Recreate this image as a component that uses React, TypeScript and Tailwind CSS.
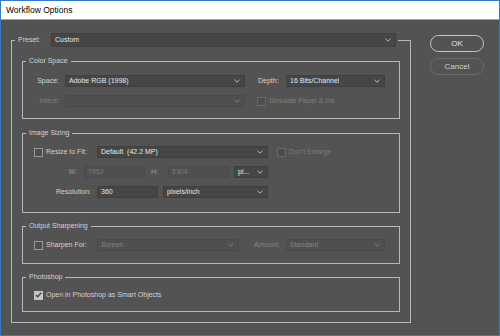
import type { ReactNode } from "react";

const font = { fontFamily: '"Liberation Sans", Arial, sans-serif' };

function Chevron({ dim }: { dim?: boolean }) {
  return (
    <svg width="6" height="4" viewBox="0 0 6 4" className="shrink-0">
      <polyline
        points="0.5,0.8 3,3.2 5.5,0.8"
        fill="none"
        stroke={dim ? "#7c7c7c" : "#bdbdbd"}
        strokeWidth="1"
      />
    </svg>
  );
}

function Select({
  value,
  w,
  disabled,
  h = "h-[12px]",
}: {
  value: string;
  w: string;
  disabled?: boolean;
  h?: string;
}) {
  return (
    <div
      className={`${w} ${h} flex shrink-0 items-center justify-between border pl-[3px] pr-[4px] ${
        disabled
          ? "border-[#4a4a4a] bg-[#4f4f4f] text-[#868686]"
          : "border-[#3f3f3f] bg-[#464646] text-[#e6e6e6]"
      }`}
    >
      <span className="truncate whitespace-pre">{value}</span>
      <Chevron dim={disabled} />
    </div>
  );
}

function Input({ value, w, disabled }: { value: string; w: string; disabled?: boolean }) {
  return (
    <div
      className={`${w} flex h-[12px] shrink-0 items-center border pl-[3px] ${
        disabled
          ? "border-[#4a4a4a] bg-[#4f4f4f] text-[#7d7d7d]"
          : "border-[#3f3f3f] bg-[#464646] text-[#e6e6e6]"
      }`}
    >
      {value}
    </div>
  );
}

function Checkbox({ checked, disabled }: { checked?: boolean; disabled?: boolean }) {
  if (checked) {
    return (
      <div className="flex h-[9px] w-[9px] shrink-0 items-center justify-center bg-[#c4c4c4]">
        <svg width="7" height="6" viewBox="0 0 7 6">
          <polyline points="0.8,3 2.7,4.8 6.2,0.8" fill="none" stroke="#4b4b4b" strokeWidth="1.4" />
        </svg>
      </div>
    );
  }
  return (
    <div
      className={`h-[9px] w-[9px] shrink-0 border bg-[#4d4d4d] ${
        disabled ? "border-[#686868]" : "border-[#9a9a9a]"
      }`}
    />
  );
}

function Group({
  title,
  children,
  className,
}: {
  title: string;
  children: ReactNode;
  className: string;
}) {
  return (
    <fieldset className={`border border-[#b8b8b8] ${className}`}>
      <legend className="ml-[3px] px-[3px] leading-[10px] text-[#d2d2d2]">{title}</legend>
      {children}
    </fieldset>
  );
}

export default function App() {
  return (
    <div
      style={font}
      className="flex h-[336px] w-[500px] flex-col border border-[#2f7cc9] bg-[#535353] text-[7px] leading-[10px] text-[#d2d2d2]"
    >
      <div className="flex h-[19px] shrink-0 items-center border-b border-[#a3a3a3] bg-white pl-[5px] text-[8.5px] text-black">
        Workflow Options
      </div>

      <div className="flex pt-[13px]">
        <fieldset className="ml-[10px] w-[400px] border border-[#b8b8b8]">
          <legend className="ml-[3px] flex items-center pl-[3px] pr-[2px]">
            <span className="w-[33px] text-[#d2d2d2]">Preset:</span>
            <Select value="Custom" w="w-[345px]" h="h-[14px]" />
          </legend>

          <div className="px-[10px] pb-[10px] pt-[9px]">
            <Group title="Color Space" className="pb-[11px] pt-[9px]">
              <div className="flex h-[12px] items-center">
                <span className="w-[36px] text-right">Space:</span>
                <div className="ml-[6px]">
                  <Select value="Adobe RGB (1998)" w="w-[180px]" />
                </div>
                <span className="ml-[13px] w-[28px]">Depth:</span>
                <Select value="16 Bits/Channel" w="w-[99px]" />
              </div>
              <div className="mt-[8px] flex h-[12px] items-center">
                <span className="w-[36px] text-right text-[#7e7e7e]">Intent:</span>
                <div className="ml-[6px]">
                  <Select value="" w="w-[180px]" disabled />
                </div>
                <div className="ml-[12px]">
                  <Checkbox disabled />
                </div>
                <span className="ml-[3px] text-[#7e7e7e]">Simulate Paper &amp; Ink</span>
              </div>
            </Group>

            <Group title="Image Sizing" className="mt-[9px] pb-[14px] pt-[8px]">
              <div className="flex h-[12px] items-center">
                <div className="ml-[11px]">
                  <Checkbox />
                </div>
                <span className="ml-[3px] w-[51px]">Resize to Fit:</span>
                <Select value="Default  (42.2 MP)" w="w-[171px]" />
                <div className="ml-[9px]">
                  <Checkbox disabled />
                </div>
                <span className="ml-[3px] text-[#7a7a7a]">Don't Enlarge</span>
              </div>
              <div className="mt-[8px] flex h-[12px] items-center">
                <span className="w-[54px] text-right text-[#9a9a9a]">W:</span>
                <div className="ml-[7px]">
                  <Input value="7952" w="w-[61px]" disabled />
                </div>
                <span className="ml-[6px] w-[17px] text-[#9a9a9a]">H:</span>
                <Input value="5304" w="w-[61px]" disabled />
                <div className="ml-[5px]">
                  <Select value="pi..." w="w-[34px]" />
                </div>
              </div>
              <div className="mt-[8px] flex h-[12px] items-center">
                <span className="w-[68px] text-right">Resolution:</span>
                <div className="ml-[6px]">
                  <Input value="360" w="w-[61px]" />
                </div>
                <div className="ml-[5px]">
                  <Select value="pixels/inch" w="w-[105px]" />
                </div>
              </div>
            </Group>

            <Group title="Output Sharpening" className="mt-[8px] pb-[12px] pt-[8px]">
              <div className="flex h-[12px] items-center">
                <div className="ml-[11px]">
                  <Checkbox />
                </div>
                <span className="ml-[3px] w-[51px]">Sharpen For:</span>
                <Select value="Screen" w="w-[142px]" disabled />
                <span className="ml-[15px] w-[32px] text-[#868686]">Amount:</span>
                <Select value="Standard" w="w-[99px]" disabled />
              </div>
            </Group>

            <Group title="Photoshop" className="mt-[8px] pb-[10px] pt-[7px]">
              <div className="flex h-[12px] items-center">
                <div className="ml-[11px]">
                  <Checkbox checked />
                </div>
                <span className="ml-[3px]">Open in Photoshop as Smart Objects</span>
              </div>
            </Group>
          </div>
        </fieldset>

        <div className="ml-[19px] flex flex-col pt-[2px]">
          <button className="flex h-[17px] w-[54px] items-center justify-center rounded-full border border-[#c4c4c4] text-[8px] text-[#e0e0e0]">
            OK
          </button>
          <button className="mt-[6px] flex h-[17px] w-[54px] items-center justify-center rounded-full border border-[#6c6c6c] text-[8px] text-[#d0d0d0]">
            Cancel
          </button>
        </div>
      </div>
    </div>
  );
}
